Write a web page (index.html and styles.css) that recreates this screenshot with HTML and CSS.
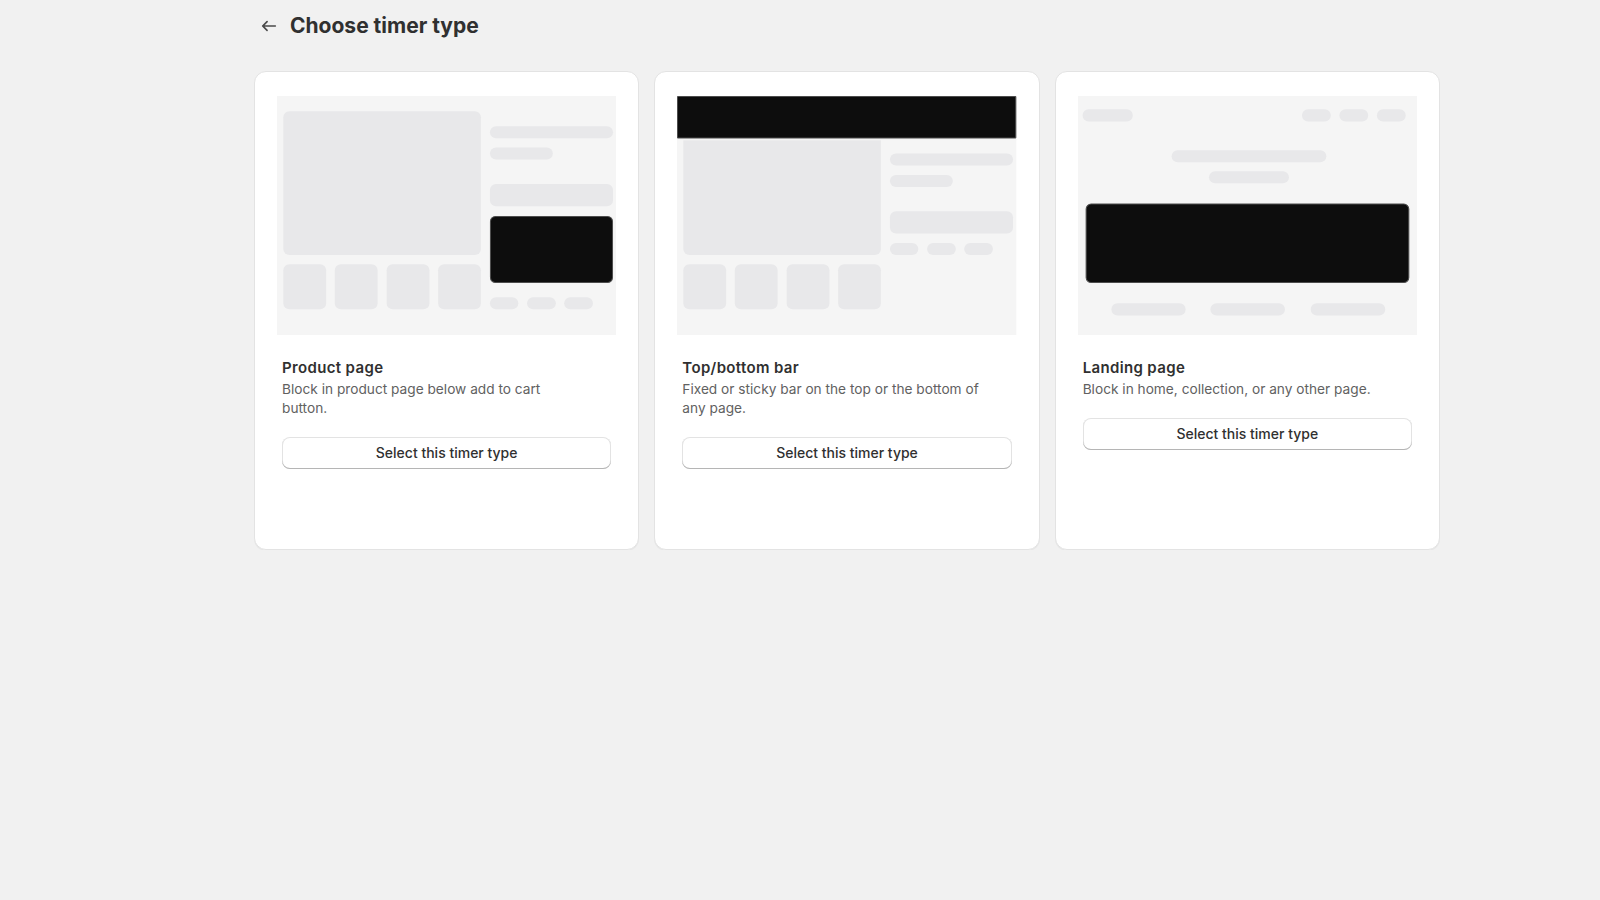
FILE: index.html
```html
<!DOCTYPE html>
<html lang="en">
<head>
<meta charset="utf-8">
<title>Choose timer type</title>
<link rel="stylesheet" href="styles.css">
</head>
<body>
<div class="page">
  <header class="page-header">
    <button class="back-btn" aria-label="Back">
      <svg viewBox="0 0 20 20" width="22" height="22"><path d="M16.5 10a.75.75 0 0 1-.75.75h-9.69l2.72 2.72a.75.75 0 0 1-1.06 1.06l-4-4a.75.75 0 0 1 0-1.06l4-4a.75.75 0 1 1 1.06 1.06l-2.72 2.72h9.69a.75.75 0 0 1 .75.75Z" fill="currentColor"/></svg>
    </button>
    <h1 class="page-title">Choose timer type</h1>
  </header>

  <div class="cards">
    <div class="card">
      <svg class="preview" viewBox="0 0 338.3 239.3" preserveAspectRatio="none">
        <rect class="bg" x="0" y="0" width="338.3" height="239.3"/>
        <rect class="sk" x="6.3" y="15.3" width="197" height="143.7" rx="6"/>
        <rect class="sk" x="6.3" y="168.3" width="42.7" height="45" rx="6"/>
        <rect class="sk" x="57.6" y="168.3" width="42.7" height="45" rx="6"/>
        <rect class="sk" x="109.3" y="168.3" width="42.7" height="45" rx="6"/>
        <rect class="sk" x="160.6" y="168.3" width="42.7" height="45" rx="6"/>
        <rect class="sk" x="212.3" y="30.3" width="122.7" height="12" rx="6"/>
        <rect class="sk" x="212.3" y="51.6" width="62.7" height="12" rx="6"/>
        <rect class="sk" x="212.3" y="88" width="122.7" height="22.3" rx="6"/>
        <rect class="dark" x="212.8" y="120.5" width="121.7" height="66" rx="5"/>
        <rect class="sk" x="212.3" y="201.3" width="28.3" height="12" rx="6"/>
        <rect class="sk" x="249.3" y="201.3" width="28.7" height="12" rx="6"/>
        <rect class="sk" x="286.3" y="201.3" width="28.7" height="12" rx="6"/>
      </svg>
      <div class="card-body">
        <h2 class="card-title">Product page</h2>
        <p class="card-desc">Block in product page below add to cart button.</p>
        <button class="select-btn">Select this timer type</button>
      </div>
    </div>

    <div class="card">
      <svg class="preview" viewBox="0 0 338.3 239.3" preserveAspectRatio="none">
        <rect class="bg" x="0" y="0" width="338.3" height="239.3"/>
        <rect class="sk" x="6.3" y="15.3" width="197" height="143.7" rx="6"/>
        <rect class="bg" x="0" y="0" width="338.3" height="44.3"/>
        <rect class="sk" x="6.3" y="168.3" width="42.7" height="45" rx="6"/>
        <rect class="sk" x="57.6" y="168.3" width="42.7" height="45" rx="6"/>
        <rect class="sk" x="109.3" y="168.3" width="42.7" height="45" rx="6"/>
        <rect class="sk" x="160.6" y="168.3" width="42.7" height="45" rx="6"/>
        <rect class="sk" x="212.3" y="57.6" width="122.7" height="12" rx="6"/>
        <rect class="sk" x="212.3" y="79" width="62.7" height="12" rx="6"/>
        <rect class="sk" x="212.3" y="115.3" width="122.7" height="22.3" rx="6"/>
        <rect class="sk" x="212.3" y="147" width="28.3" height="12" rx="6"/>
        <rect class="sk" x="249.3" y="147" width="28.7" height="12" rx="6"/>
        <rect class="sk" x="286.3" y="147" width="28.7" height="12" rx="6"/>
        <rect class="dark" x="0.5" y="0.5" width="337.3" height="41.5" rx="0.5"/>
      </svg>
      <div class="card-body">
        <h2 class="card-title">Top/bottom bar</h2>
        <p class="card-desc">Fixed or sticky bar on the top or the bottom of any page.</p>
        <button class="select-btn">Select this timer type</button>
      </div>
    </div>

    <div class="card">
      <svg class="preview" viewBox="0 0 338.3 239.3" preserveAspectRatio="none">
        <rect class="bg" x="0" y="0" width="338.3" height="239.3"/>
        <rect class="sk" x="4.6" y="13.3" width="50" height="12.3" rx="6"/>
        <rect class="sk" x="223.3" y="13.3" width="28.7" height="12.3" rx="6"/>
        <rect class="sk" x="260.6" y="13.3" width="28.7" height="12.3" rx="6"/>
        <rect class="sk" x="298" y="13.3" width="28.7" height="12.3" rx="6"/>
        <rect class="sk" x="93.3" y="54.3" width="154.3" height="12" rx="6"/>
        <rect class="sk" x="130.6" y="75.3" width="79.7" height="12" rx="6"/>
        <rect class="dark" x="8.1" y="108.1" width="321.7" height="78.4" rx="5"/>
        <rect class="sk" x="33.3" y="207.3" width="74" height="12.3" rx="6"/>
        <rect class="sk" x="132" y="207.3" width="74.3" height="12.3" rx="6"/>
        <rect class="sk" x="232" y="207.3" width="74.3" height="12.3" rx="6"/>
      </svg>
      <div class="card-body">
        <h2 class="card-title">Landing page</h2>
        <p class="card-desc">Block in home, collection, or any other page.</p>
        <button class="select-btn">Select this timer type</button>
      </div>
    </div>
  </div>
</div>
</body>
</html>
```

FILE: styles.css
```css
* { box-sizing: border-box; }

html, body {
  margin: 0;
  padding: 0;
}

body {
  background: #f1f1f1;
  font-family: Inter, "Noto Sans", "Liberation Sans", sans-serif;
  color: #303030;
  -webkit-font-smoothing: antialiased;
}

.page {
  margin-left: 254px;
  width: 1186px;
}

.page-header {
  height: 52px;
  display: flex;
  align-items: center;
  gap: 6px;
}

.back-btn {
  width: 30px;
  height: 28px;
  padding: 0;
  margin: 0;
  border: 0;
  background: transparent;
  color: #4a4a4a;
  display: flex;
  align-items: center;
  justify-content: center;
  cursor: pointer;
}

.back-btn svg { display: block; }

.page-title {
  margin: 0;
  font-size: 21px;
  line-height: 26px;
  font-weight: 700;
  color: #303030;
  letter-spacing: 0;
}

.cards {
  margin-top: 18.5px;
  display: grid;
  grid-template-columns: repeat(3, 1fr);
  gap: 15px;
}

.card {
  height: 479px;
  background: #fff;
  border: 1px solid #e3e3e3;
  border-radius: 12px;
  box-shadow: 0 1px 0 rgba(0, 0, 0, 0.04);
  padding: 24px 22px 23px;
  display: flex;
  flex-direction: column;
}

.preview {
  display: block;
  width: 100%;
  height: 239.3px;
}

.preview .bg { fill: #f5f5f5; }
.preview .sk { fill: #e8e8ea; }
.preview .dark {
  fill: #0d0d0d;
  stroke: #4d4d4d;
  stroke-width: 1;
}

.card-body {
  margin: 23px 5px 0;
  display: flex;
  flex-direction: column;
}

.card-title {
  margin: 0 0 2px;
  font-size: 15px;
  line-height: 20px;
  font-weight: 600;
  letter-spacing: 0.35px;
  color: #303030;
}

.card-desc {
  margin: 0;
  max-width: 302px;
  font-size: 13.7px;
  line-height: 19px;
  color: #616161;
}

.select-btn {
  margin-top: 19px;
  height: 32px;
  width: 100%;
  border: 0;
  border-radius: 8px;
  background: #fff;
  font-family: inherit;
  font-size: 14px;
  font-weight: 450;
  color: #303030;
  box-shadow: inset 0 -1px 0 0 #b5b5b5, inset 0 0 0 1px #e3e3e3;
  cursor: pointer;
  padding: 0 12px 1px;
}
```
